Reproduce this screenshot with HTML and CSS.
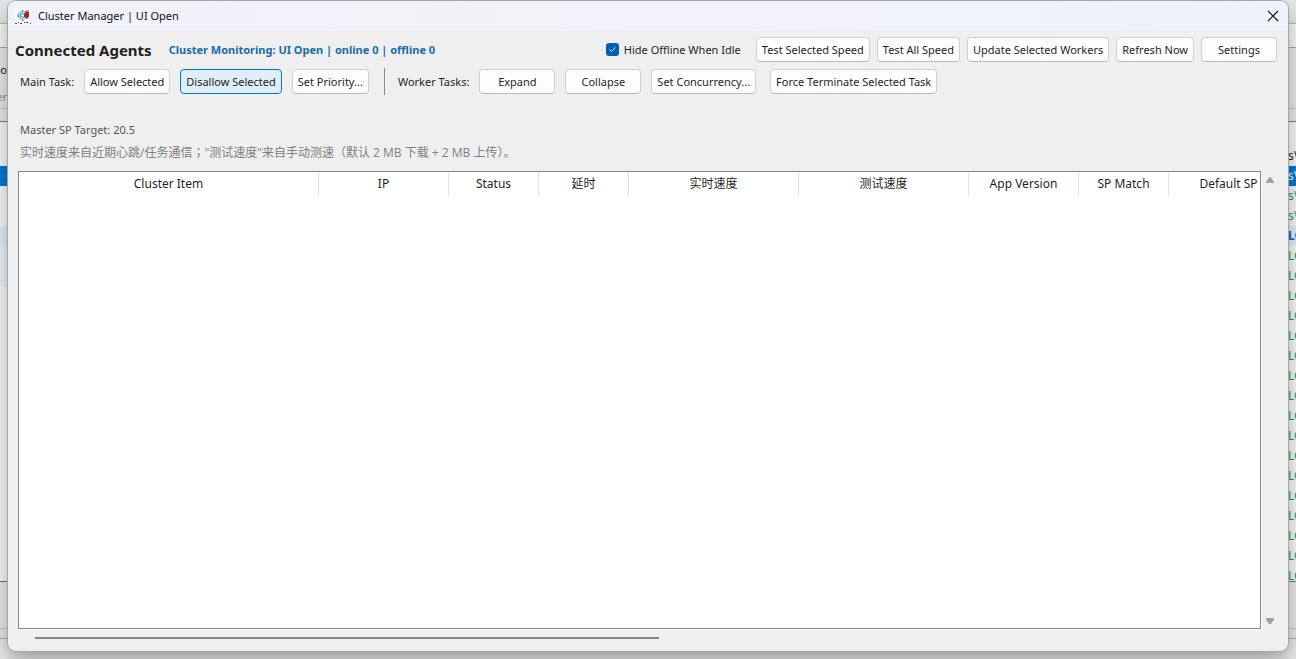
FILE: index.html
```
<!DOCTYPE html>
<html lang="en">
<head>
  <meta charset="utf-8">
  <title>Cluster Manager | UI Open</title>
  <meta name="viewport" content="width=device-width, initial-scale=1">
  <link rel="stylesheet" href="styles.css">
</head>
<body>
  <div class="desktop">
    <div class="backdrop backdrop-left">
      <div class="back-top"></div>
      <div class="back-bar"></div>
      <div class="back-form"><span>o</span><span class="dim">er</span></div>
      <div class="back-tabs"></div>
      <div class="back-list">
        <div class="row"></div>
        <div class="row"></div>
        <div class="row selected"></div>
        <div class="row"></div>
        <div class="row"></div>
        <div class="row hover"></div>
        <div class="row tint"></div>
        <div class="row tint"></div>
      </div>
      <div class="back-status"></div>
      <div class="back-foot"></div>
    </div>

    <main class="window">
      <header class="titlebar">
        <svg class="app-icon" width="16" height="16" viewBox="0 0 16 16">
          <rect width="16" height="16" fill="#fff"/>
          <path d="M2.500 7.500l5-5 2 2M2.500 7.500l5 5 2-2M5 7.500L7.500 5 9 6.500M5 7.500L7.500 10 9 8.500" fill="none" stroke="#3a9cc8" stroke-width="1.200" stroke-dasharray="2.500 .5"/>
          <path d="M9 5.500l2-1.500h3v4.500L12 11l-3-2z" fill="#b3202a"/>
          <path d="M10 3.500l2-.5h2" stroke="#444" stroke-width="1" fill="none"/>
          <path d="M0 15.500h2M3 14.500h1M5 15.500h2M9 14.500h1M11 14.500h2M15 15.500h1" stroke="#444" stroke-width="1"/>
        </svg>
        <span class="caption">Cluster Manager | UI Open</span>
        <button class="close" type="button" aria-label="Close">
          <svg width="12" height="12" viewBox="0 0 12 12"><path d="M1 1l10 10M11 1L1 11" stroke="#111" stroke-width="1.200" fill="none"/></svg>
        </button>
      </header>

      <div class="toolbar">
        <h1>Connected Agents</h1>
        <span class="monitor">Cluster Monitoring: UI Open | online 0 | offline 0</span>
        <div class="actions">
          <label class="check"><input type="checkbox" checked>Hide Offline When Idle</label>
          <button type="button" class="btn">Test Selected Speed</button>
          <button type="button" class="btn">Test All Speed</button>
          <button type="button" class="btn">Update Selected Workers</button>
          <button type="button" class="btn">Refresh Now</button>
          <button type="button" class="btn">Settings</button>
        </div>
      </div>

      <div class="taskbar">
        <span>Main Task:</span>
        <button type="button" class="btn">Allow Selected</button>
        <button type="button" class="btn active">Disallow Selected</button>
        <button type="button" class="btn">Set Priority...</button>
        <span class="divider"></span>
        <span>Worker Tasks:</span>
        <button type="button" class="btn">Expand</button>
        <button type="button" class="btn">Collapse</button>
        <button type="button" class="btn">Set Concurrency...</button>
        <button type="button" class="btn force">Force Terminate Selected Task</button>
      </div>

      <p class="target">Master SP Target: 20.5</p>
      <p class="hint">实时速度来自近期心跳/任务通信；"测试速度"来自手动测速（默认 2 MB 下载 + 2 MB 上传）。</p>

      <div class="grid-area">
        <div class="grid">
          <table>
            <colgroup>
              <col class="c-item"><col class="c-ip"><col class="c-status"><col class="c-status">
              <col class="c-speed"><col class="c-speed"><col class="c-version"><col class="c-match"><col class="c-default">
            </colgroup>
            <thead>
              <tr>
                <th>Cluster Item</th>
                <th>IP</th>
                <th>Status</th>
                <th>延时</th>
                <th>实时速度</th>
                <th>测试速度</th>
                <th>App Version</th>
                <th>SP Match</th>
                <th>Default SP</th>
              </tr>
            </thead>
            <tbody></tbody>
          </table>
        </div>
        <div class="vscroll">
          <svg width="8" height="6" viewBox="0 0 8 6"><path d="M3.500 0h1L8 5v1H0V5z" fill="#a0a0a0"/></svg>
          <svg width="8" height="6" viewBox="0 0 8 6"><path d="M0 0h8v1.500L5 6H3L0 1.500z" fill="#a0a0a0"/></svg>
        </div>
      </div>
      <div class="hscroll"><div class="thumb"></div></div>
    </main>

    <div class="backdrop backdrop-right">
      <div class="back-top"></div>
      <div class="back-bar"></div>
      <div class="back-form"></div>
      <div class="back-tabs"></div>
      <div class="back-list">
        <div class="row"></div>
        <div class="row path">s\</div>
        <div class="row path selected">s\</div>
        <div class="row">s\</div>
        <div class="row">s\</div>
        <div class="row current">LO</div>
        <div class="row">LO</div>
        <div class="row">LO</div>
        <div class="row">LO</div>
        <div class="row">LO</div>
        <div class="row">LO</div>
        <div class="row">LO</div>
        <div class="row">LO</div>
        <div class="row">LO</div>
        <div class="row">LO</div>
        <div class="row">LO</div>
        <div class="row">LO</div>
        <div class="row">LO</div>
        <div class="row">LO</div>
        <div class="row">LO</div>
        <div class="row">LO</div>
        <div class="row">LO</div>
        <div class="row">LO</div>
      </div>
      <div class="back-status"></div>
      <div class="back-foot"></div>
    </div>
  </div>
</body>
</html>
```
FILE: styles.css
```
* {
  box-sizing: border-box;
}

body {
  margin: 0;
  font-family: "Noto Sans", "Noto Sans CJK SC", sans-serif;
  font-size: 11px;
  line-height: 16px;
  color: #1f1f1f;
}

.desktop {
  display: grid;
  grid-template-columns: 8px minmax(0, 1fr) 8px;
  height: 100vh;
  overflow: hidden;
  background: #e8e8e8;
}

/* application behind the dialog */
.backdrop {
  display: flex;
  flex-direction: column;
  overflow: hidden;
  white-space: nowrap;
}

.back-top {
  height: 24px;
  border-bottom: 1px solid #bbb;
}

.back-bar {
  height: 24px;
  background: #f8f8f8;
  border-bottom: 1px solid #aaa;
}

.back-form {
  display: flex;
  flex-direction: column;
  align-items: flex-end;
  gap: 11px;
  height: 61px;
  padding: 14px 1px 0 0;
  border-bottom: 1px solid #c4c4c4;
}

.back-form .dim {
  color: #888;
}

.back-tabs {
  height: 13px;
  border-bottom: 1px solid #77777f;
}

.back-list {
  height: 460px;
  padding-top: 4px;
  overflow: hidden;
  background: #f8f8f8;
  border-bottom: 1px solid #77777f;
}

.row {
  height: 20px;
  font-size: 12px;
  line-height: 20px;
  color: #1f9a4c;
}

.row.path {
  color: #222;
}

.row.selected {
  background: #0078d4;
  color: #fff;
}

.row.hover {
  background: #e2eef8;
}

.row.tint {
  background: #eef2f8;
}

.row.current {
  background: #e2eef8;
  color: #0b62c4;
  font-weight: bold;
}

.back-status {
  height: 47px;
  border-bottom: 1px solid #ccc;
}

.back-foot {
  height: 10px;
  border-bottom: 1px solid #aaa;
}

/* dialog */
.window {
  display: flex;
  flex-direction: column;
  position: relative;
  z-index: 1;
  margin: 1px 0 8px;
  overflow: hidden;
  background: #efefef;
  border-radius: 8px;
  box-shadow: 0 0 0 1px #a6a6a6, 0 8px 20px rgba(0, 0, 0, 0.35);
}

.titlebar {
  display: flex;
  align-items: center;
  height: 30px;
  padding: 0 7px;
  background: linear-gradient(90deg, #f0f2fa, #f4f0f8 35%, #f1f2fa 65%, #edf3f8);
}

.caption {
  margin-left: 7px;
  color: #111;
}

.close {
  display: flex;
  align-items: center;
  margin-left: auto;
  padding: 2px;
  background: none;
  border: 0;
}

.btn {
  min-width: 76px;
  height: 25px;
  padding: 0 5px;
  font: inherit;
  color: #1f1f1f;
  white-space: nowrap;
  background: #fdfdfd;
  border: 1px solid #d0d0d0;
  border-bottom-color: #bbb;
  border-radius: 4px;
}

.btn.active {
  background: #e0eef9;
  border-color: #0078d4;
}

.toolbar {
  display: flex;
  align-items: center;
  margin-top: 6px;
  padding: 0 11px 0 7px;
  white-space: nowrap;
}

h1 {
  margin: 0;
  font-size: 15px;
  line-height: 24px;
}

.monitor {
  margin-left: 17px;
  font-weight: bold;
  color: #1a6ca8;
}

.actions {
  display: flex;
  align-items: center;
  gap: 7px;
  margin-left: auto;
}

.check {
  display: flex;
  align-items: center;
  gap: 5px;
  margin-right: 8px;
}

.check input {
  width: 13px;
  height: 13px;
  margin: 0;
  appearance: none;
  border-radius: 3px;
  background: #005fb8 url("data:image/svg+xml,%3Csvg xmlns='http://www.w3.org/2000/svg' viewBox='0 0 13 13'%3E%3Cpath d='M3.500 6.500l2 2 4-4' fill='none' stroke='white'/%3E%3C/svg%3E");
}

.taskbar {
  display: flex;
  align-items: center;
  gap: 10px;
  margin-top: 6px;
  padding: 0 12px;
  white-space: nowrap;
}

.divider {
  width: 1px;
  height: 27px;
  margin: 0 3px 0 5px;
  background: #8c8c8c;
}

.force {
  margin-left: 4px;
}

.target,
.hint {
  margin: 0 12px;
}

.target {
  margin-top: 27px;
  color: #555;
}

.hint {
  margin-top: 7px;
  font-family: "Open Sans", "Noto Sans CJK JP", sans-serif;
  font-size: 12px;
  color: #808080;
}

.grid-area {
  display: flex;
  flex: 1;
  min-height: 0;
  margin: 10px 12px 0 10px;
}

.grid {
  flex: 1;
  min-width: 0;
  overflow: hidden;
  background: #fff;
  border: 1px solid #828790;
  box-shadow: 1px 1px 0 #fff;
}

table {
  width: 1270px;
  font-size: 12px;
  table-layout: fixed;
  border-collapse: separate;
  border-spacing: 0;
}

th {
  height: 24px;
  padding: 0;
  font-weight: normal;
  border-right: 1px solid #e2e2e2;
}

.c-item { width: 300px; }
.c-ip { width: 130px; }
.c-status { width: 90px; }
.c-speed { width: 170px; }
.c-version { width: 110px; }
.c-match { width: 90px; }
.c-default { width: 120px; }

.vscroll {
  display: flex;
  flex-direction: column;
  align-items: center;
  justify-content: space-between;
  width: 15px;
  padding: 6px 0 5px 3px;
}

.hscroll {
  height: 22px;
  padding: 8px 30px 0 27px;
}

.thumb {
  width: 51%;
  height: 2px;
  background: #868686;
}
```
